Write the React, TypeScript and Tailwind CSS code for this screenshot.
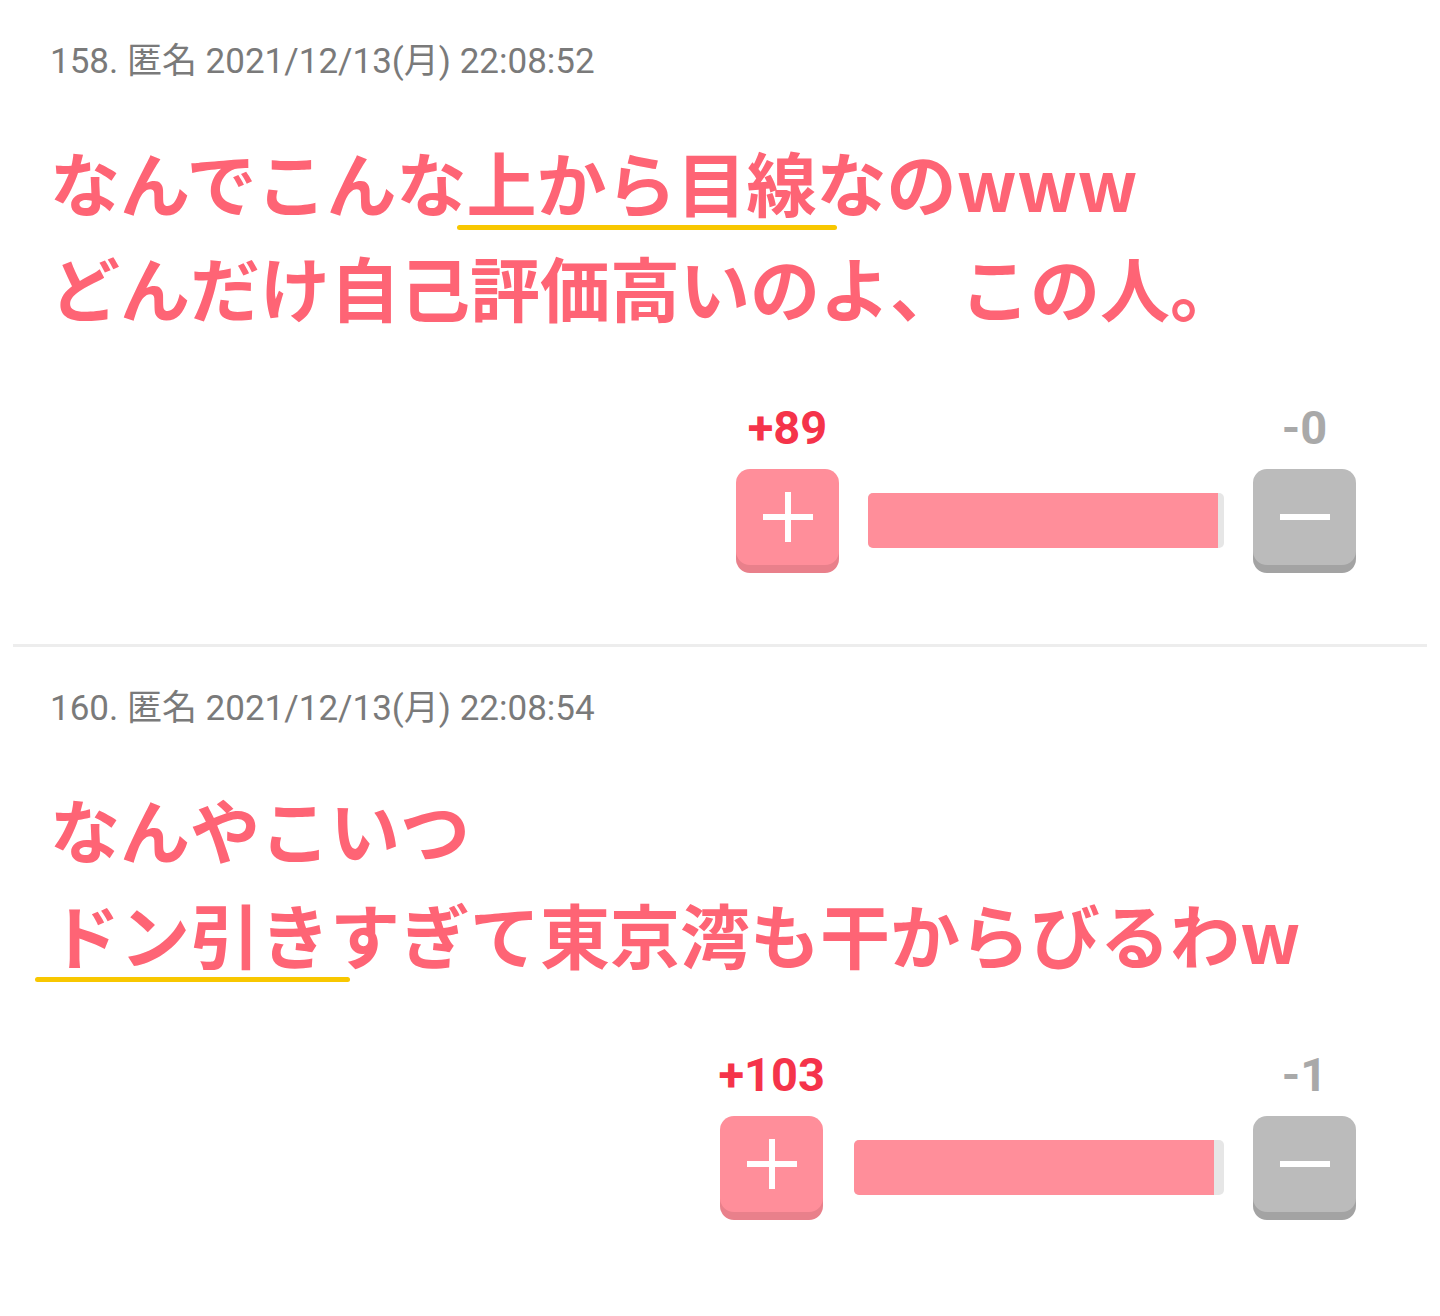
import React from "react";

interface Post {
  no: number;
  time: string;
  lines: React.ReactNode[];
  plus: number;
  minus: number;
  barClass: string;
  fillClass: string;
}

function Mark({ children, edge }: { children: React.ReactNode; edge: string }) {
  return (
    <span className="relative">
      {children}
      <span className={`absolute bottom-[2px] h-[5px] rounded-full bg-[#f8c700] ${edge}`} />
    </span>
  );
}

const posts: Post[] = [
  {
    no: 158,
    time: "2021/12/13(月) 22:08:52",
    lines: [
      <>
        なんでこんな<Mark edge="left-[-10px] right-[-20px]">上から目線</Mark>なのwww
      </>,
      "どんだけ自己評価高いのよ、この人。",
    ],
    plus: 89,
    minus: 0,
    barClass: "w-[356px]",
    fillClass: "w-[350px]",
  },
  {
    no: 160,
    time: "2021/12/13(月) 22:08:54",
    lines: [
      "なんやこいつ",
      <>
        <Mark edge="left-[-15px] right-[-20px]">ドン引き</Mark>すぎて東京湾も干からびるわw
      </>,
    ],
    plus: 103,
    minus: 1,
    barClass: "w-[370px]",
    fillClass: "w-[360px]",
  },
];

function VoteButton({ kind }: { kind: "plus" | "minus" }) {
  const face =
    kind === "plus"
      ? "bg-[#ff8e9a] shadow-[0_8px_0_#e9808b]"
      : "bg-[#bbbbbb] shadow-[0_8px_0_#a3a3a3]";
  return (
    <div className={`mb-[8px] flex h-[96px] w-[103px] items-center justify-center rounded-[14px] ${face}`}>
      <svg width="50" height="50" viewBox="0 0 50 50">
        <rect x="0" y="22" width="50" height="6" fill="#fff" />
        {kind === "plus" && <rect x="22" y="0" width="6" height="50" fill="#fff" />}
      </svg>
    </div>
  );
}

function PostItem({ post }: { post: Post }) {
  return (
    <article className="px-[50px] pt-[40px] pb-[71px]">
      <div className="font-[Roboto,'Noto_Sans_CJK_JP',sans-serif] text-[35px] leading-[44px] text-[#7a7a7a]">
        {post.no}. 匿名 {post.time}
      </div>

      <div className="mt-[45px] font-['Noto_Sans_CJK_JP',sans-serif] text-[70px] font-bold leading-[105px] text-[#fe6475]">
        {post.lines.map((line, i) => (
          <div key={i}>{line}</div>
        ))}
      </div>

      <div className="mt-[63px] flex items-start justify-end pr-[34px] font-[Roboto,sans-serif]">
        <div className="flex flex-col items-center">
          <span className="text-[47px] font-bold leading-[52px] text-[#f5334a]">+{post.plus}</span>
          <div className="mt-[15px]">
            <VoteButton kind="plus" />
          </div>
        </div>

        <div className={`ml-[29px] mt-[91px] flex h-[55px] overflow-hidden rounded-[5px] bg-[#e6e6e6] ${post.barClass}`}>
          <div className={`h-full bg-[#ff8e9a] ${post.fillClass}`} />
        </div>

        <div className="ml-[29px] flex flex-col items-center">
          <span className="text-[47px] font-bold leading-[52px] text-[#a9a9a9]">-{post.minus}</span>
          <div className="mt-[15px]">
            <VoteButton kind="minus" />
          </div>
        </div>
      </div>
    </article>
  );
}

export default function App() {
  return (
    <div className="min-h-screen bg-white">
      {posts.map((post, i) => (
        <div key={post.no}>
          {i > 0 && <div className="mx-[13px] h-[3px] bg-[#ededed]" />}
          <PostItem post={post} />
        </div>
      ))}
    </div>
  );
}
